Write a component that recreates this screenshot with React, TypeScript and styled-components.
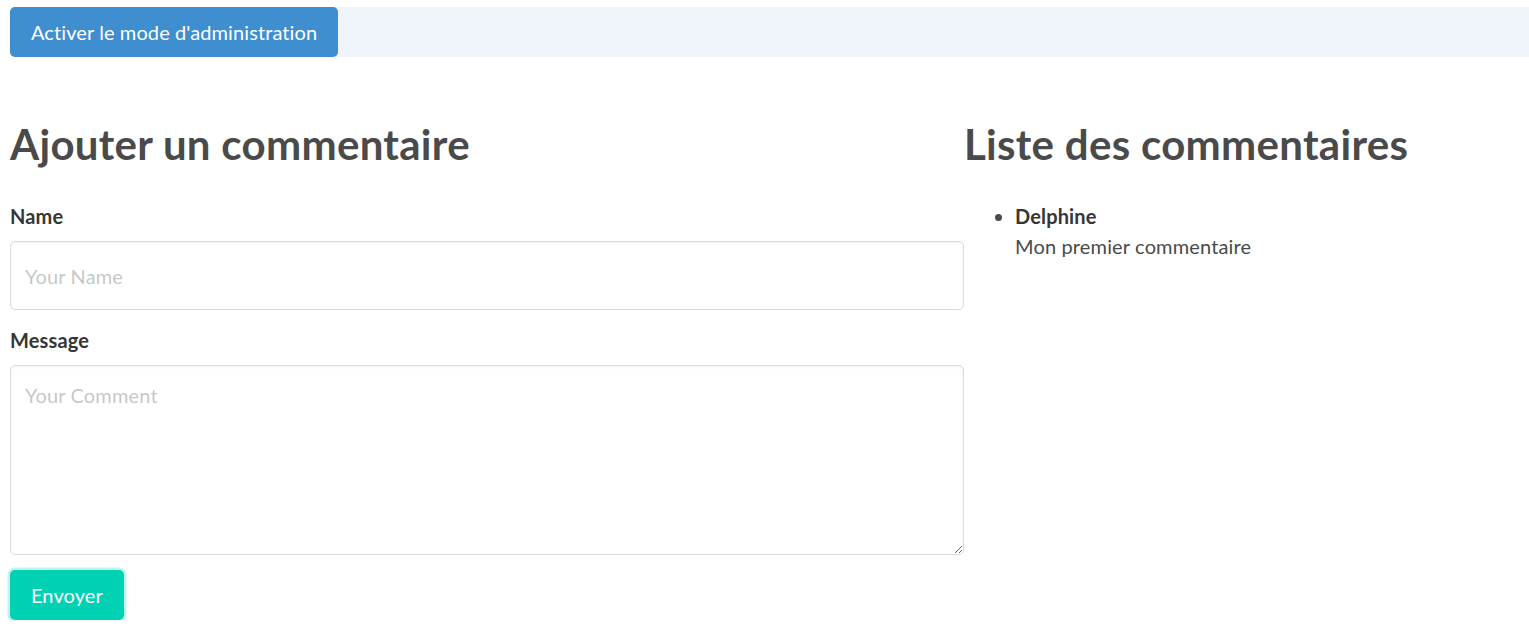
import React from "react";
import styled, { createGlobalStyle } from "styled-components";

const GlobalStyle = createGlobalStyle`
  html, body {
    margin: 0;
    padding: 0;
    background: #ffffff;
  }
  body {
    font-family: "Lato", "Open Sans", "Noto Sans", sans-serif;
    font-size: 20px;
    line-height: 1.5;
    letter-spacing: 0.15px;
    color: #4a4a4a;
  }
  * { box-sizing: border-box; }
`;

const Page = styled.div`
  padding: 7px 0 0 10px;
`;

const AdminBar = styled.div`
  display: flex;
  align-items: center;
  height: 50px;
  background: #eff5fb;
  border-radius: 5px 0 0 5px;
`;

const Button = styled.button<{ $variant: "info" | "primary"; $focused?: boolean }>`
  display: inline-flex;
  align-items: center;
  justify-content: center;
  height: 50px;
  padding: 0 20px;
  border: 1px solid transparent;
  border-radius: 5px;
  font-family: inherit;
  font-size: 20px;
  letter-spacing: 0.1px;
  color: #ffffff;
  cursor: pointer;
  background: ${(p) => (p.$variant === "info" ? "#3e8ed0" : "#00d1b2")};
  box-shadow: ${(p) => (p.$focused ? "0 0 0 2.5px rgba(0, 209, 178, 0.25)" : "none")};
  white-space: nowrap;
`;

const Columns = styled.div`
  display: flex;
  align-items: flex-start;
  margin-top: 65px;
`;

const FormColumn = styled.form`
  width: 954px;
  flex: none;
  display: flex;
  flex-direction: column;
`;

const ListColumn = styled.section`
  flex: 1;
  min-width: 0;
`;

const Title = styled.h1`
  margin: 0 0 34px;
  font-size: 42px;
  line-height: 45px;
  font-weight: 700;
  letter-spacing: 0.3px;
  color: #4a4a4a;
`;

const Field = styled.div`
  display: flex;
  flex-direction: column;
  margin-bottom: 15px;
`;

const Label = styled.label`
  display: block;
  font-size: 20px;
  font-weight: 700;
  line-height: 30px;
  color: #363636;
  margin-bottom: 10px;
`;

const controlBase = `
  width: 100%;
  font-family: inherit;
  font-size: 20px;
  line-height: 30px;
  letter-spacing: 0.15px;
  color: #363636;
  background: #ffffff;
  border: 1px solid #dbdbdb;
  border-radius: 5px;
  box-shadow: inset 0 0.0625em 0.125em rgba(10, 10, 10, 0.05);
  outline: none;
  &::placeholder {
    color: rgba(54, 54, 54, 0.3);
  }
`;

const Input = styled.input`
  ${controlBase}
  height: 69px;
  padding: 0 14px;
`;

const TextArea = styled.textarea`
  ${controlBase}
  display: block;
  height: 190px;
  padding: 14px 14px;
  resize: vertical;
`;

const Actions = styled.div`
  display: flex;
`;

const CommentList = styled.ul`
  margin: 0;
  padding-left: 51px;
  list-style: disc;
  color: #4a4a4a;
`;

const CommentItem = styled.li`
  line-height: 30px;
  &::marker {
    color: #4a4a4a;
  }
`;

const Author = styled.strong`
  display: block;
  font-weight: 700;
  color: #363636;
`;

const Body = styled.span`
  display: block;
`;

const comments = [{ name: "Delphine", message: "Mon premier commentaire" }];

export default function App() {
  return (
    <>
      <GlobalStyle />
      <Page>
        <AdminBar>
          <Button type="button" $variant="info">
            Activer le mode d'administration
          </Button>
        </AdminBar>
        <Columns>
          <FormColumn onSubmit={(e) => e.preventDefault()}>
            <Title>Ajouter un commentaire</Title>
            <Field>
              <Label htmlFor="name">Name</Label>
              <Input id="name" type="text" placeholder="Your Name" />
            </Field>
            <Field>
              <Label htmlFor="message">Message</Label>
              <TextArea id="message" placeholder="Your Comment" />
            </Field>
            <Actions>
              <Button type="submit" $variant="primary" $focused>
                Envoyer
              </Button>
            </Actions>
          </FormColumn>
          <ListColumn>
            <Title>Liste des commentaires</Title>
            <CommentList>
              {comments.map((c) => (
                <CommentItem key={c.name}>
                  <Author>{c.name}</Author>
                  <Body>{c.message}</Body>
                </CommentItem>
              ))}
            </CommentList>
          </ListColumn>
        </Columns>
      </Page>
    </>
  );
}
